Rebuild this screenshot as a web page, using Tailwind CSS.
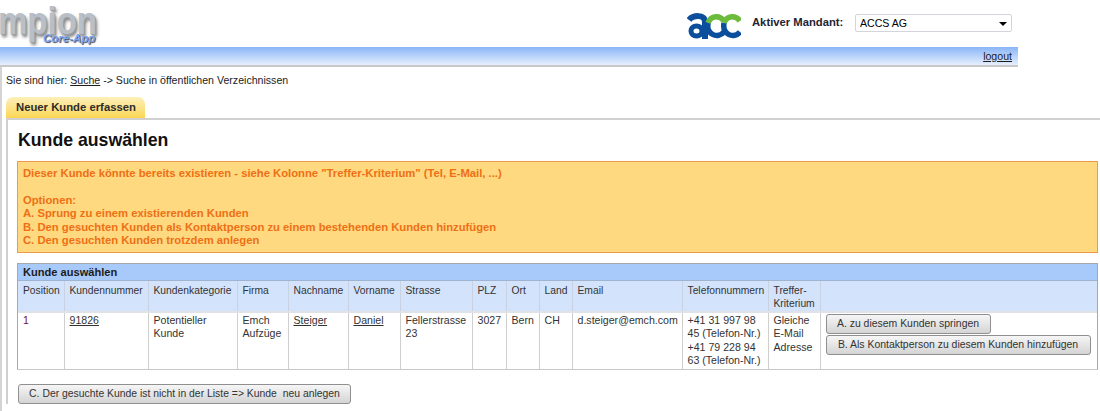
<!DOCTYPE html>
<html lang="en">
<head>
    <meta charset="UTF-8">
    <title>Kunde auswählen</title>
    <script src="https://cdn.jsdelivr.net/npm/@tailwindcss/browser@4"></script>
</head>
<body class="bg-white font-['Liberation_Sans',Arial,sans-serif] text-[10.6px] leading-[13.5px] text-[#1c1c1c] overflow-hidden h-[411px]">
    <!-- header -->
    <div class="h-[47px] w-[1018px] flex items-start relative">
        <div class="relative w-[130px] h-[47px] overflow-hidden">
            <span class="absolute left-[-2px] top-[1px] scale-y-[1.2] font-bold text-[33px] leading-[40px] text-[#b9bfc6] [text-shadow:1px_1px_0_#9aa0a8,2px_2px_3px_#777]">mpion</span>
            <span class="absolute left-[43px] top-[31px] font-bold italic text-[11.5px] leading-[14px] text-[#7aa5f0] [text-shadow:1px_1px_1px_#445]">Core-App</span>
        </div>
        <svg class="ml-[557px] mt-[13px] w-[54px] h-[26px]" viewBox="0 0 54 26" fill="none">
            <path d="M2 7C6 2 18 1 18 9V26" stroke="#0b4f9c" stroke-width="6"/>
            <ellipse cx="9.5" cy="18" rx="5.5" ry="5" stroke="#0b4f9c" stroke-width="5"/>
            <path d="M37 8C33 2 24 2 21 10" stroke="#6cbb3c" stroke-width="5.5"/>
            <path d="M21 10C19 22 31 26 37 19" stroke="#0b4f9c" stroke-width="5.5"/>
            <path d="M53 8C49 2 40 2 37 10" stroke="#6cbb3c" stroke-width="5.5"/>
            <path d="M37 10C35 22 47 26 53 19" stroke="#0b4f9c" stroke-width="5.5"/>
        </svg>
        <span class="ml-[11px] mt-[16px] font-bold text-[11.25px] text-[#1f2433]">Aktiver Mandant:</span>
        <div class="absolute left-[855px] top-[14px] w-[157px] h-[18px] border border-[#d4d4dc] rounded-[2px] flex items-center justify-between pl-[4px] pr-[4px] pt-[2px] text-black">
            <span>ACCS AG</span>
            <span class="w-0 h-0 border-x-[4px] border-x-transparent border-t-[4px] border-t-black"></span>
        </div>
    </div>

    <!-- blue bar -->
    <div class="w-[1018px] h-[20px] bg-gradient-to-b from-[#8ab5f6] to-[#e6effd] border-b-2 border-[#c8c8c8] flex justify-end pr-[6px] pt-[3px]">
        <a class="underline text-[#1c1c1c]" href="#">logout</a>
    </div>

    <div class="border-l-2 border-[#d4d4d4] h-[345px]">
        <p class="pl-[4px] pt-[7px]">Sie sind hier: <a class="underline" href="#">Suche</a> -&gt; Suche in öffentlichen Verzeichnissen</p>

        <!-- tab -->
        <div class="ml-[4px] mt-[9px] w-[139px] h-[21px] rounded-t-[7px] bg-gradient-to-b from-[#fdf0b8] to-[#fbd64f] font-bold text-[11.3px] pl-[10px] pt-[4px] text-[#2c2c2c]">Neuer Kunde erfassen</div>

        <div class="ml-[4px] border-l-2 border-t-2 border-[#d0d0d0] pl-[9px] pr-[2px]">
            <h1 class="font-bold text-[17.7px] leading-[22px] mt-[9px] pl-[1px] text-[#111]">Kunde auswählen</h1>

            <div class="mt-[10px] h-[92px] bg-[#ffd97f] border border-[#ee9a4d] pl-[5px] pt-[5px] font-bold text-[11.25px] text-[#ee6f16]">
                <p>Dieser Kunde könnte bereits existieren - siehe Kolonne "Treffer-Kriterium" (Tel, E-Mail, ...)</p>
                <p class="mt-[13.5px]">Optionen:</p>
                <p>A. Sprung zu einem existierenden Kunden</p>
                <p>B. Den gesuchten Kunden als Kontaktperson zu einem bestehenden Kunden hinzufügen</p>
                <p>C. Den gesuchten Kunden trotzdem anlegen</p>
            </div>

            <!-- result table -->
            <div class="mt-[10px] border border-[#a8a8a8] border-b-[#c8c8c8]">
                <div class="h-[17px] bg-[#a8cafb] font-bold text-[11.1px] pl-[5px] pt-[2px] text-[#1c1c1c] border-b border-[#9fb4d0]">Kunde auswählen</div>
                <table class="w-full table-fixed border-collapse">
                    <colgroup>
                        <col class="w-[46px]"><col class="w-[84px]"><col class="w-[89px]"><col class="w-[51px]"><col class="w-[60px]"><col class="w-[52px]"><col class="w-[72px]"><col class="w-[34px]"><col class="w-[33px]"><col class="w-[33px]"><col class="w-[110px]"><col class="w-[86px]"><col class="w-[52px]"><col>
                    </colgroup>
                    <thead>
                        <tr class="h-[30px] bg-[#d3e3fb] align-top text-left text-[10.3px] text-[#333]">
                            <th class="font-normal pl-[5px] pt-[3px] border-r border-[#c8d2e0]">Position</th>
                            <th class="font-normal pl-[5px] pt-[3px] border-r border-[#c8d2e0]">Kundennummer</th>
                            <th class="font-normal pl-[5px] pt-[3px] border-r border-[#c8d2e0]">Kundenkategorie</th>
                            <th class="font-normal pl-[5px] pt-[3px] border-r border-[#c8d2e0]">Firma</th>
                            <th class="font-normal pl-[5px] pt-[3px] border-r border-[#c8d2e0]">Nachname</th>
                            <th class="font-normal pl-[5px] pt-[3px] border-r border-[#c8d2e0]">Vorname</th>
                            <th class="font-normal pl-[5px] pt-[3px] border-r border-[#c8d2e0]">Strasse</th>
                            <th class="font-normal pl-[5px] pt-[3px] border-r border-[#c8d2e0]">PLZ</th>
                            <th class="font-normal pl-[5px] pt-[3px] border-r border-[#c8d2e0]">Ort</th>
                            <th class="font-normal pl-[5px] pt-[3px] border-r border-[#c8d2e0]">Land</th>
                            <th class="font-normal pl-[5px] pt-[3px] border-r border-[#c8d2e0]">Email</th>
                            <th class="font-normal pl-[5px] pt-[3px] border-r border-[#c8d2e0]">Telefonnummern</th>
                            <th class="font-normal pl-[5px] pt-[3px] border-r border-[#c8d2e0]">Treffer-<br>Kriterium</th>
                            <th></th>
                        </tr>
                    </thead>
                    <tbody>
                        <tr class="h-[57px] align-top text-[#333] border-t-2 border-[#dfe3e8]">
                            <td class="pl-[5px] pt-[1px] border-r border-[#cfcfcf] text-[#7a1030]">1</td>
                            <td class="pl-[5px] pt-[1px] border-r border-[#cfcfcf]"><a class="underline" href="#">91826</a></td>
                            <td class="pl-[5px] pt-[1px] border-r border-[#cfcfcf]">Potentieller<br>Kunde</td>
                            <td class="pl-[5px] pt-[1px] border-r border-[#cfcfcf]">Emch<br>Aufzüge</td>
                            <td class="pl-[5px] pt-[1px] border-r border-[#cfcfcf]"><a class="underline" href="#">Steiger</a></td>
                            <td class="pl-[5px] pt-[1px] border-r border-[#cfcfcf]"><a class="underline" href="#">Daniel</a></td>
                            <td class="pl-[5px] pt-[1px] border-r border-[#cfcfcf]">Fellerstrasse<br>23</td>
                            <td class="pl-[5px] pt-[1px] border-r border-[#cfcfcf]">3027</td>
                            <td class="pl-[5px] pt-[1px] border-r border-[#cfcfcf]">Bern</td>
                            <td class="pl-[5px] pt-[1px] border-r border-[#cfcfcf]">CH</td>
                            <td class="pl-[5px] pt-[1px] border-r border-[#cfcfcf]">d.steiger@emch.com</td>
                            <td class="pl-[5px] pt-[1px] border-r border-[#cfcfcf]">+41 31 997 98<br>45 (Telefon-Nr.)<br>+41 79 228 94<br>63 (Telefon-Nr.)</td>
                            <td class="pl-[5px] pt-[1px] border-r border-[#cfcfcf]">Gleiche<br>E-Mail<br>Adresse</td>
                            <td class="pl-[5px] pt-[1px]">
                                <button class="block h-[20px] w-[165px] border border-[#8f8f8f] rounded-[3px] bg-gradient-to-b from-[#f6f6f6] to-[#d4d4d4] text-[10.45px] text-[#333] text-center">A. zu diesem Kunden springen</button>
                                <button class="block mt-[1px] h-[20px] w-[265px] border border-[#8f8f8f] rounded-[3px] bg-gradient-to-b from-[#f6f6f6] to-[#d4d4d4] text-[10.45px] text-[#333] text-center">B. Als Kontaktperson zu diesem Kunden hinzufügen</button>
                            </td>
                        </tr>
                    </tbody>
                </table>
            </div>

            <button class="block mt-[14px] ml-[1px] h-[20px] w-[333px] border border-[#8f8f8f] rounded-[3px] bg-gradient-to-b from-[#f6f6f6] to-[#d4d4d4] text-[10.4px] text-[#333] text-center whitespace-pre">C. Der gesuchte Kunde ist nicht in der Liste =&gt; Kunde  neu anlegen</button>
        </div>
    </div>
</body>
</html>
